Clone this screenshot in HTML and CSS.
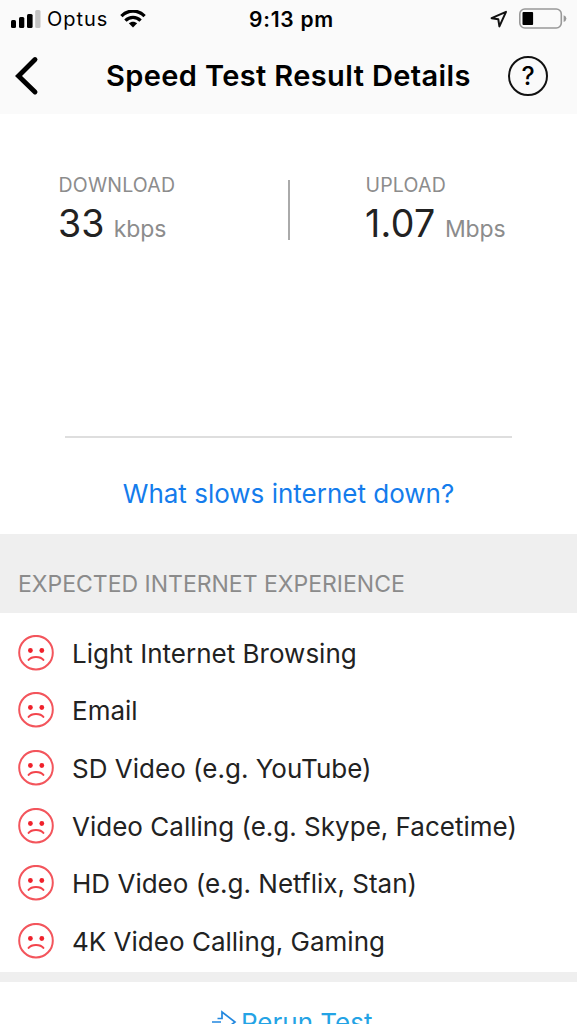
FILE: index.html
```
<!DOCTYPE html>
<html lang="en">
<head>
<meta charset="utf-8">
<title>Speed Test Result Details</title>
<link rel="stylesheet" href="styles.css">
</head>
<body>
<svg class="defs" aria-hidden="true">
  <symbol id="sad" viewBox="0 0 36 36">
    <circle cx="18" cy="17.7" r="16.8" fill="none" stroke="#f3555c" stroke-width="2"/>
    <circle cx="12.4" cy="15.5" r="2.4" fill="#f0212b"/>
    <circle cx="23.8" cy="15.5" r="2.4" fill="#f0212b"/>
    <path d="M10.6 24.9C13.5 20.9 22.5 20.9 25.4 24.9" fill="none" stroke="#f3444c" stroke-width="2" stroke-linecap="round"/>
  </symbol>
</svg>
<header class="top">
  <div class="status">
    <div class="carrier">
      <svg width="30" height="19" viewBox="0 0 30 19"><rect y="10" width="5" height="8" rx="1.5"/><rect x="8" y="7" width="5.3" height="11" rx="1.5"/><rect x="16" y="4" width="5.6" height="14" rx="1.5"/><rect x="24.2" width="5.3" height="18" rx="1.5" fill="#c4c4c4"/></svg>
      <span class="carrier-name">Optus</span>
      <svg class="wifi" width="26" height="19" viewBox="0 0 26 19"><g fill="none" stroke="#000" stroke-width="3.3"><path d="M1.4 6.1C8-.6 18-.6 24.6 6.1"/><path d="M5.4 10.6C9.8 6.3 16.2 6.3 20.6 10.6"/></g><path d="M8.8 13.3C11.2 11.1 14.8 11.1 17.2 13.3L13 17.6Z"/></svg>
    </div>
    <time class="clock">9:13 pm</time>
    <div class="power">
      <svg width="18" height="18" viewBox="0 0 18 18"><path d="M1.6 8.2L16 1.8L9.4 16.4L8.3 9.3Z" fill="none" stroke="#111" stroke-width="2" stroke-linejoin="round"/></svg>
      <svg class="battery" width="48" height="22" viewBox="0 0 48 22"><rect x=".8" y="1" width="41.5" height="19" rx="5" fill="none" stroke="#999" stroke-width="1.6"/><rect x="3.5" y="4" width="10.6" height="13" rx="1"/><path d="M44.6 7.3Q47.4 8.3 47.4 10.6T44.6 14Z" fill="#999"/></svg>
    </div>
  </div>
  <nav class="nav">
    <svg class="back" width="24" height="40" viewBox="0 0 24 40"><path d="M20 3.5L3.5 20L20 36" fill="none" stroke="#000" stroke-width="4.9" stroke-linecap="round"/></svg>
    <h1 class="title">Speed Test Result Details</h1>
    <span class="help">?</span>
  </nav>
</header>
<section class="speeds">
  <div class="speed"><div class="label">DOWNLOAD</div><div class="reading"><span class="value">33</span><span class="unit">kbps</span></div></div>
  <div class="divider"></div>
  <div class="speed"><div class="label">UPLOAD</div><div class="reading"><span class="value up">1.07</span><span class="unit">Mbps</span></div></div>
</section>
<section class="link-row"><a class="link">What slows internet down?</a></section>
<h2 class="section-head">EXPECTED INTERNET EXPERIENCE</h2>
<ul class="list">
  <li class="item"><svg class="face"><use href="#sad"/></svg><span class="name">Light Internet Browsing</span></li>
  <li class="item"><svg class="face"><use href="#sad"/></svg><span class="name">Email</span></li>
  <li class="item"><svg class="face"><use href="#sad"/></svg><span class="name">SD Video (e.g. YouTube)</span></li>
  <li class="item"><svg class="face"><use href="#sad"/></svg><span class="name">Video Calling (e.g. Skype, Facetime)</span></li>
  <li class="item"><svg class="face"><use href="#sad"/></svg><span class="name">HD Video (e.g. Netflix, Stan)</span></li>
  <li class="item"><svg class="face"><use href="#sad"/></svg><span class="name">4K Video Calling, Gaming</span></li>
</ul>
<footer class="rerun">
  <svg width="26" height="26" viewBox="0 0 26 26"><path d="M6.5 11.5H11V5L24 15L11 25V19H6.5M1 15H10" fill="none" stroke="#2388df" stroke-width="1.7"/></svg>
  <span class="rerun-text">Rerun Test</span>
</footer>
</body>
</html>
```
FILE: styles.css
```
* { box-sizing: border-box; }
html, body { margin: 0; height: 1024px; overflow: hidden; }
body { width: 577px; background: #fff; color: #222; font-family: Inter, "Liberation Sans", sans-serif; white-space: nowrap; display: flex; flex-direction: column; }
h1, h2, ul { margin: 0; padding: 0; font-weight: 400; }
.defs { display: none; }
svg { flex: none; display: block; }
.top { height: 114px; background: #fafafa; color: #000; flex: none; }
.status { height: 38px; display: grid; grid-template-columns: 249px 1fr 87px; align-items: center; }
.carrier { display: flex; align-items: center; padding-left: 11px; }
.carrier-name { font-size: 20px; margin-left: 6px; width: 61px; letter-spacing: .95px; }
.wifi { margin-left: 12px; }
.clock { font-size: 21px; font-weight: 600; letter-spacing: .75px; }
.power { display: flex; align-items: center; }
.battery { margin-left: 11px; }
.nav { height: 76px; display: grid; grid-template-columns: 106px 402px 40px; align-items: center; }
.back { margin-left: 15px; }
.title { font-size: 29px; font-weight: 600; line-height: 40px; letter-spacing: .38px; }
.help { width: 40px; height: 40px; border: 2px solid #111; border-radius: 50%; font-size: 25px; font-weight: 500; line-height: 36px; text-align: center; }
.speeds { height: 322px; flex: none; padding: 61px 0 0 58px; display: grid; grid-template-columns: 229px 2px 1fr; align-items: start; }
.speeds .speed:last-child { padding-left: 76px; }
.divider { width: 2px; height: 60px; margin: 5px 0 0 1px; background: #aaa; }
.label { font-size: 19.5px; line-height: 20px; letter-spacing: .2px; color: #8c8c8c; padding-left: .5px; }
.reading { display: flex; align-items: baseline; line-height: 57px; }
.value { font-size: 37.5px; }
.up { letter-spacing: .3px; }
.unit { font-size: 23px; color: #8c8c8c; margin-left: 9.5px; letter-spacing: -.15px; }
.link-row { height: 98px; flex: none; margin: 0 65px; border-top: 2px solid #dedede; text-align: center; }
.link { font-size: 26px; line-height: 112px; color: #147cec; }
.section-head { height: 79px; flex: none; padding: 22px 18px 0; background: #efefef; color: #8b8b8b; font-size: 23px; line-height: 57px; }
.list { height: 359px; flex: none; padding-top: 11px; list-style: none; }
.item { height: 57.65px; display: flex; align-items: center; font-size: 26px; padding-left: 18px; }
.name { padding-top: 1px; letter-spacing: .01px; }
.face { width: 36px; height: 36px; margin-right: 18px; }
.rerun { flex: none; height: 52px; border-top: 10px solid #efefef; padding: 25px 0 0 211px; display: flex; align-items: flex-start; overflow: hidden; }
.rerun-text { font-size: 26px; line-height: 31px; margin-left: 4px; color: #24a3e5; }
```
